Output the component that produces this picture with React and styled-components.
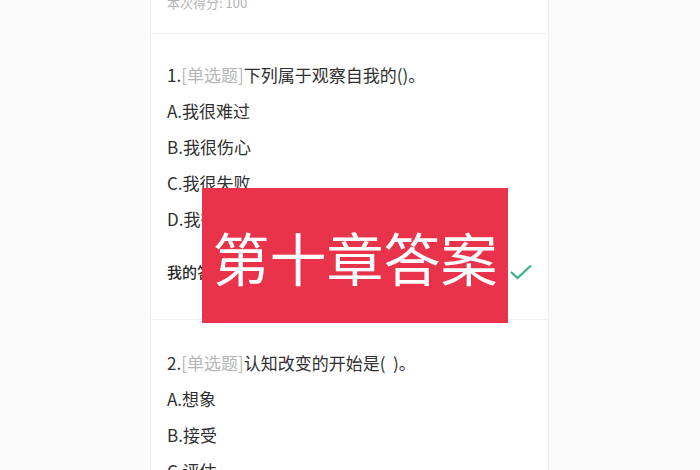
import styled, { createGlobalStyle } from 'styled-components';

const GlobalStyle = createGlobalStyle`
  html, body {
    margin: 0;
    padding: 0;
    background: #fbfbfb;
    overflow: hidden;
  }
  body {
    font-family: "Noto Sans CJK SC", "Noto Sans", sans-serif;
  }
`;

const Screen = styled.div`
  position: relative;
  width: 397px;
  height: 470px;
  margin-left: 150px;
  background: #ffffff;
  border-left: 1px solid #f0f0f0;
  border-right: 1px solid #f0f0f0;
  overflow: hidden;
`;

const ScoreBar = styled.div`
  display: flow-root;
  height: 33px;
  padding: 0 16px;
  font-size: 13px;
  line-height: 20px;
  color: #b3b3b3;
`;

const ScoreText = styled.div`
  margin-top: -7px;
`;

const Card = styled.div`
  border-top: 1px solid #efefef;
  padding: ${(p) => p.$pad || '23px 16px 30px'};
`;

const Question = styled.div`
  font-size: 17px;
  line-height: 36px;
  color: #303030;
`;

const Tag = styled.span`
  color: #b5b5b5;
`;

const Option = styled.div`
  font-size: 17px;
  line-height: 36px;
  color: #303030;
`;

const AnswerRow = styled.div`
  display: flex;
  align-items: center;
  justify-content: space-between;
  margin-top: 17px;
  font-size: 15px;
  line-height: 35px;
  color: #2b2b2b;
  font-weight: 500;
`;

const Banner = styled.div`
  position: absolute;
  left: 51px;
  top: 188px;
  width: 306px;
  height: 135px;
  background: #e8334a;
  display: flex;
  align-items: center;
  justify-content: center;
  color: #ffffff;
  font-size: 57px;
  font-weight: 400;
`;

const Check = () => (
  <svg width="22" height="16" viewBox="0 0 22 16">
    <path d="M1 8 L7.5 14 L21 1.5" fill="none" stroke="#35b386" strokeWidth="2.2" />
  </svg>
);

const App = () => (
  <>
    <GlobalStyle />
    <Screen>
      <ScoreBar>
        <ScoreText>本次得分: 100</ScoreText>
      </ScoreBar>
      <Card>
        <Question>
          1.<Tag>[单选题]</Tag>下列属于观察自我的()。
        </Question>
        <Option>A.我很难过</Option>
        <Option>B.我很伤心</Option>
        <Option>C.我很失败</Option>
        <Option>D.我很自卑</Option>
        <AnswerRow>
          <span>我的答案：A</span>
          <Check />
        </AnswerRow>
      </Card>
      <Card $pad="25px 16px 20px">
        <Question>
          2.<Tag>[单选题]</Tag>认知改变的开始是(&nbsp;&nbsp;)。
        </Question>
        <Option>A.想象</Option>
        <Option>B.接受</Option>
        <Option>C.评估</Option>
      </Card>
      <Banner>第十章答案</Banner>
    </Screen>
  </>
);

export default App;
